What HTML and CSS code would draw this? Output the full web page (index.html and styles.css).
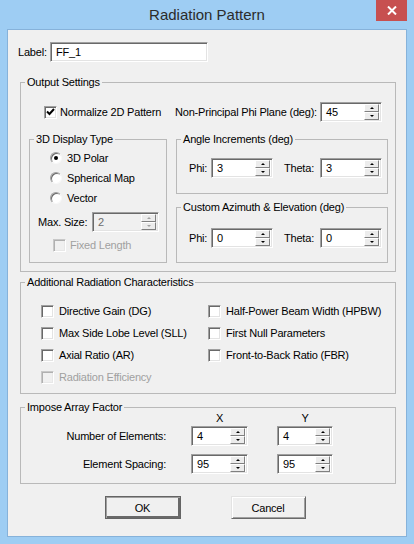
FILE: index.html
```html
<!DOCTYPE html>
<html>
<head>
<meta charset="utf-8">
<title>Radiation Pattern</title>
<link rel="stylesheet" href="styles.css">
</head>
<body>
<div class="window">
  <div class="titlebar">
    <div></div>
    <div class="title">Radiation Pattern</div>
    <div class="tb-right">
      <div class="close"><svg width="10" height="9" viewBox="0 0 10 9"><path d="M1 0.5 L9 8.5 M9 0.5 L1 8.5" stroke="#fff" stroke-width="2" fill="none"/></svg></div>
    </div>
  </div>
  <div class="panel">
    <div class="label-row">
      <span class="lbl">Label:</span>
      <div class="edit">FF_1</div>
    </div>

    <fieldset class="group out">
      <legend>Output Settings</legend>
      <div class="out-body">
        <div class="chk normalize"><span class="box"><svg width="9" height="8" viewBox="0 0 9 8"><path d="M1 3.5 L3.5 6 L8 1" stroke="#000" stroke-width="2" fill="none"/></svg></span><span>Normalize 2D Pattern</span></div>
        <div class="npp">
          <span class="npp-text">Non-Principal Phi Plane (deg):</span>
          <div class="spin w62"><span class="val">45</span><span class="arrows"><i class="up"></i><i class="dn"></i></span></div>
        </div>

        <fieldset class="group disp">
          <legend>3D Display Type</legend>
          <div class="radios">
            <div class="radio-row"><span class="radio on"></span><span>3D Polar</span></div>
            <div class="radio-row"><span class="radio"></span><span>Spherical Map</span></div>
            <div class="radio-row"><span class="radio"></span><span>Vector</span></div>
          </div>
          <div class="maxsize">
            <span class="ms-lbl">Max. Size:</span>
            <div class="spin w67 disabled"><span class="val">2</span><span class="arrows"><i class="up"></i><i class="dn"></i></span></div>
          </div>
          <div class="chk fixed disabled"><span class="box"></span><span>Fixed Length</span></div>
        </fieldset>

        <div class="right-col">
          <fieldset class="group angle">
            <legend>Angle Increments (deg)</legend>
            <div class="pt-row">
              <span class="phi-lbl">Phi:</span>
              <div class="spin w62"><span class="val">3</span><span class="arrows"><i class="up"></i><i class="dn"></i></span></div>
              <span class="theta-lbl">Theta:</span>
              <div class="spin w62"><span class="val">3</span><span class="arrows"><i class="up"></i><i class="dn"></i></span></div>
            </div>
          </fieldset>
          <fieldset class="group custom">
            <legend>Custom Azimuth &amp; Elevation (deg)</legend>
            <div class="pt-row">
              <span class="phi-lbl">Phi:</span>
              <div class="spin w62"><span class="val">0</span><span class="arrows"><i class="up"></i><i class="dn"></i></span></div>
              <span class="theta-lbl">Theta:</span>
              <div class="spin w62"><span class="val">0</span><span class="arrows"><i class="up"></i><i class="dn"></i></span></div>
            </div>
          </fieldset>
        </div>
      </div>
    </fieldset>

    <fieldset class="group addl">
      <legend>Additional Radiation Characteristics</legend>
      <div class="addl-body">
        <div class="chk"><span class="box"></span><span>Directive Gain (DG)</span></div>
        <div class="chk"><span class="box"></span><span>Half-Power Beam Width (HPBW)</span></div>
        <div class="chk"><span class="box"></span><span>Max Side Lobe Level (SLL)</span></div>
        <div class="chk"><span class="box"></span><span>First Null Parameters</span></div>
        <div class="chk"><span class="box"></span><span>Axial Ratio (AR)</span></div>
        <div class="chk"><span class="box"></span><span>Front-to-Back Ratio (FBR)</span></div>
        <div class="chk disabled"><span class="box"></span><span>Radiation Efficiency</span></div>
      </div>
    </fieldset>

    <fieldset class="group imp">
      <legend>Impose Array Factor</legend>
      <div class="imp-head">
        <span class="imp-lbl"></span>
        <span class="hx">X</span>
        <span class="hy">Y</span>
      </div>
      <div class="imp-row first">
        <span class="imp-lbl">Number of Elements:</span>
        <div class="spin w57"><span class="val">4</span><span class="arrows"><i class="up"></i><i class="dn"></i></span></div>
        <div class="spin w56 ycol"><span class="val">4</span><span class="arrows"><i class="up"></i><i class="dn"></i></span></div>
      </div>
      <div class="imp-row second">
        <span class="imp-lbl">Element Spacing:</span>
        <div class="spin w57"><span class="val">95</span><span class="arrows"><i class="up"></i><i class="dn"></i></span></div>
        <div class="spin w56 ycol"><span class="val">95</span><span class="arrows"><i class="up"></i><i class="dn"></i></span></div>
      </div>
    </fieldset>

    <div class="buttons">
      <div class="btn default">OK</div>
      <div class="btn">Cancel</div>
    </div>
  </div>
</div>
</body>
</html>
```

FILE: styles.css
```css
* { box-sizing: border-box; }
html, body { margin: 0; padding: 0; }
body {
  width: 414px;
  height: 544px;
  overflow: hidden;
  font-family: "Liberation Sans", Arial, sans-serif;
  font-size: 11px;
  letter-spacing: -0.2px;
  color: #000;
}
.window {
  width: 414px;
  height: 544px;
  background: #9ecdf3;
  display: flex;
  flex-direction: column;
}
.titlebar {
  height: 29px;
  flex: none;
  display: grid;
  grid-template-columns: 1fr auto 1fr;
}
.title {
  font-size: 15px;
  letter-spacing: 0;
  line-height: 30px;
  color: #2b2b2b;
}
.tb-right {
  display: flex;
  justify-content: flex-end;
  padding-right: 7px;
}
.close {
  width: 31px;
  height: 21px;
  background: #c75050;
  display: flex;
  align-items: center;
  justify-content: center;
}
.panel {
  flex: 1;
  margin: 0 7px 7px 7px;
  border: 1px solid #86b2da;
  background: #f0f0f0;
  padding: 12px 10px 0 12px;
}

/* label row */
.label-row {
  display: flex;
  align-items: center;
  height: 20px;
  margin-left: -2px;
}
.lbl { width: 32px; }
.edit {
  width: 158px;
  height: 20px;
  background: #fff;
  border: 1px solid;
  border-color: #a0a0a0 #fff #fff #a0a0a0;
  box-shadow: inset 1px 1px 0 #696969, inset -1px -1px 0 #e3e3e3;
  padding: 0 0 0 5px;
  line-height: 18px;
}

/* group boxes */
fieldset.group {
  margin: 0;
  padding: 0;
  border: 1px solid #b9b9b9;
  min-width: 0;
}
fieldset.group > legend {
  padding: 0 2px;
  margin-left: 4px;
  line-height: 16px;
  height: 16px;
}

/* output settings */
fieldset.out { margin-top: 12px; height: 198px; }
.out-body {
  display: grid;
  grid-template-columns: 138px 212px;
  column-gap: 9px;
  row-gap: 9px;
  padding: 12px 0 0 8px;
}
.chk {
  display: flex;
  align-items: center;
  gap: 5px;
  height: 20px;
}
.normalize { padding-left: 15px; gap: 3px; }
.npp {
  display: flex;
  align-items: center;
  justify-content: space-between;
  padding-right: 6px;
  height: 20px;
}
.npp-text { margin-left: -1px; }

.box {
  width: 13px;
  height: 13px;
  flex: none;
  background: #fff;
  border: 1px solid;
  border-color: #a0a0a0 #fff #fff #a0a0a0;
  box-shadow: inset 1px 1px 0 #696969, inset -1px -1px 0 #e3e3e3;
  display: flex;
  align-items: center;
  justify-content: center;
}
.chk.disabled { color: #a0a0a0; }
.chk.disabled .box {
  background: #f0f0f0;
  border-color: #c8c8c8 #fff #fff #c8c8c8;
  box-shadow: inset 1px 1px 0 #b0b0b0, inset -1px -1px 0 #e8e8e8;
}

/* radios */
fieldset.disp { height: 132px; }
.radios { padding: 1px 0 0 20px; }
.radio-row {
  display: flex;
  align-items: center;
  gap: 5px;
  height: 20px;
}
.radio {
  width: 12px;
  height: 12px;
  flex: none;
  border-radius: 50%;
  background: #fff;
  border: 1px solid;
  border-color: #a0a0a0 #f8f8f8 #f8f8f8 #a0a0a0;
  box-shadow: inset 1px 1px 0 #696969;
  display: flex;
  align-items: center;
  justify-content: center;
}
.radio.on::after {
  content: "";
  width: 4px;
  height: 4px;
  border-radius: 50%;
  background: #000;
}
.maxsize {
  display: flex;
  align-items: center;
  height: 20px;
  margin-top: 4px;
  padding-left: 8px;
}
.ms-lbl { width: 54px; }
.fixed { margin-top: 3px; padding-left: 23px; gap: 4px; }

.right-col {
  display: flex;
  flex-direction: column;
  gap: 5px;
}
fieldset.angle { height: 63px; }
fieldset.custom { height: 64px; }
.pt-row {
  display: flex;
  align-items: center;
  height: 20px;
  padding-left: 12px;
}
.angle .pt-row { margin-top: 11px; }
.custom .pt-row { margin-top: 13px; }
.phi-lbl { width: 22px; }
.theta-lbl { width: 36px; margin-left: 11px; }

/* spin boxes */
.spin {
  height: 20px;
  flex: none;
  display: flex;
  align-items: center;
  background: #fff;
  border: 1px solid;
  border-color: #a0a0a0 #fff #fff #a0a0a0;
  box-shadow: inset 1px 1px 0 #696969, inset -1px -1px 0 #e3e3e3;
  padding: 1px 2px 1px 1px;
}
.w62 { width: 62px; }
.w67 { width: 67px; }
.w57 { width: 57px; }
.w56 { width: 56px; }
.spin .val { flex: 1; padding-left: 4px; line-height: 16px; }
.arrows {
  display: flex;
  flex-direction: column;
  width: 15px;
  height: 16px;
}
.arrows i {
  flex: 1;
  background: #ececec;
  border: 1px solid;
  border-color: #fff #808080 #808080 #fff;
  display: flex;
  align-items: center;
  justify-content: center;
}
.arrows i::after {
  content: "";
  border-left: 2px solid transparent;
  border-right: 2px solid transparent;
}
.arrows .up::after { border-bottom: 2px solid #000; }
.arrows .dn::after { border-top: 2px solid #000; }
.spin.disabled { background: #f0f0f0; color: #6d6d6d; }
.spin.disabled .arrows .up::after { border-bottom-color: #a0a0a0; }
.spin.disabled .arrows .dn::after { border-top-color: #a0a0a0; }

/* additional */
fieldset.addl { margin-top: 2px; height: 120px; }
.addl-body {
  display: grid;
  grid-template-columns: 167px auto;
  grid-auto-rows: 22px;
  padding: 11px 0 0 20px;
}

/* impose */
fieldset.imp { margin-top: 5px; height: 85px; }
.imp-head, .imp-row {
  display: flex;
  align-items: center;
}
.imp-head { height: 12px; margin-top: -3px; line-height: 12px; }
.imp-row { height: 20px; }
.imp-row.first { margin-top: 2px; }
.imp-row.second { margin-top: 8px; }
.imp-lbl { width: 145px; margin-right: 25px; text-align: right; flex: none; }
.hx { width: 57px; text-align: center; }
.hy { width: 56px; margin-left: 29px; text-align: center; }
.ycol { margin-left: 29px; }

/* buttons */
.buttons {
  display: flex;
  justify-content: center;
  gap: 50px;
  margin-top: 12px;
  padding-right: 6px;
}
.btn {
  width: 75px;
  height: 23px;
  background: #f0f0f0;
  border: 1px solid;
  border-color: #e3e3e3 #696969 #696969 #e3e3e3;
  box-shadow: inset 1px 1px 0 #fff, inset -1px -1px 0 #a0a0a0;
  display: flex;
  align-items: center;
  justify-content: center;
}
.btn.default {
  width: 76px;
  border: 1px solid #646464;
  box-shadow: inset 1px 1px 0 #a0a0a0, inset -2px -2px 0 #696969;
}
```
